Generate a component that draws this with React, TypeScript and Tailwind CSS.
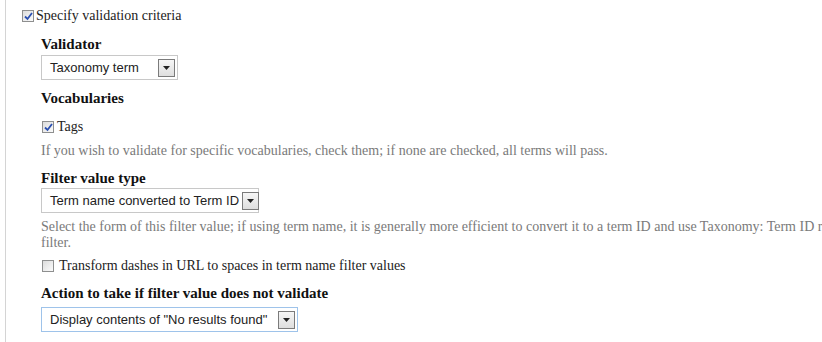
import React from 'react';

const serif = "font-['Liberation_Serif','DejaVu_Serif',serif]";
const sans = "font-['Liberation_Sans',Arial,sans-serif]";

function Check({ checked }: { checked?: boolean }) {
  return (
    <span className="inline-flex h-[12px] w-[12px] shrink-0 items-center justify-center border border-[#8e8f8f] bg-gradient-to-br from-[#dcdcdc] to-[#fbfbfb]">
      {checked && (
        <svg width="9" height="9" viewBox="0 0 9 9">
          <path d="M1 4.5 L3.5 7 L8 1" fill="none" stroke="#2a4fb0" strokeWidth="1.8" />
        </svg>
      )}
    </span>
  );
}

function Select({ value, width, focus }: { value: string; width: string; focus?: boolean }) {
  return (
    <div
      className={`flex h-[25px] items-center justify-between border bg-white pl-[8px] pr-[2px] ${width} ${
        focus ? 'border-[#9ec3ea]' : 'border-[#c8c8c8]'
      }`}
    >
      <span className={`${sans} whitespace-nowrap text-[13px] text-[#222]`}>{value}</span>
      <span className="ml-[3px] flex h-[18px] w-[17px] shrink-0 items-center justify-center border border-[#7b7b7b] bg-gradient-to-b from-[#f6f6f6] to-[#dedede]">
        <svg width="7" height="4" viewBox="0 0 7 4">
          <path d="M0 0 H7 L3.5 4 Z" fill="#222" />
        </svg>
      </span>
    </div>
  );
}

export default function App() {
  return (
    <div className={`h-[342px] w-[822px] overflow-hidden bg-white ${serif}`}>
      <div className="ml-[5px] h-full border-l border-[#d4d4d4] pl-[16px] pt-[8px]">
        <label className="flex items-center gap-[2px] text-[14px] leading-[16px] text-[#222]">
          <Check checked />
          <span>Specify validation criteria</span>
        </label>

        <div className="ml-[19px] mt-[12px]">
          <div className="text-[15px] font-bold leading-[16px] text-[#111]">Validator</div>
          <div className="mt-[3px]">
            <Select value="Taxonomy term" width="w-[137px]" />
          </div>

          <div className="mt-[10px] text-[15px] font-bold leading-[16px] text-[#111]">Vocabularies</div>
          <label className="mt-[13px] flex items-center gap-[3px] pl-[1px] text-[14px] leading-[16px] text-[#222]">
            <Check checked />
            <span>Tags</span>
          </label>
          <p className="mt-[8px] whitespace-nowrap text-[14px] leading-[16px] text-[#7a7a7a]">
            If you wish to validate for specific vocabularies, check them; if none are checked, all terms will pass.
          </p>

          <div className="mt-[11px] text-[15px] font-bold leading-[16px] text-[#111]">Filter value type</div>
          <div className="mt-[2px]">
            <Select value="Term name converted to Term ID" width="w-[218px]" />
          </div>
          <p className="mt-[6px] whitespace-nowrap text-[14px] leading-[16px] text-[#7a7a7a]">
            Select the form of this filter value; if using term name, it is generally more efficient to convert it to a term ID and use Taxonomy: Term ID rather than Taxonomy: Term as the
            <br />
            filter.
          </p>

          <label className="mt-[7px] flex items-center gap-[5px] pl-[1px] text-[14px] leading-[16px] text-[#222]">
            <Check />
            <span>Transform dashes in URL to spaces in term name filter values</span>
          </label>

          <div className="mt-[11px] text-[15px] font-bold leading-[16px] text-[#111]">Action to take if filter value does not validate</div>
          <div className="mt-[6px]">
            <Select value={'Display contents of "No results found"'} width="w-[257px]" focus />
          </div>
        </div>
      </div>
    </div>
  );
}
